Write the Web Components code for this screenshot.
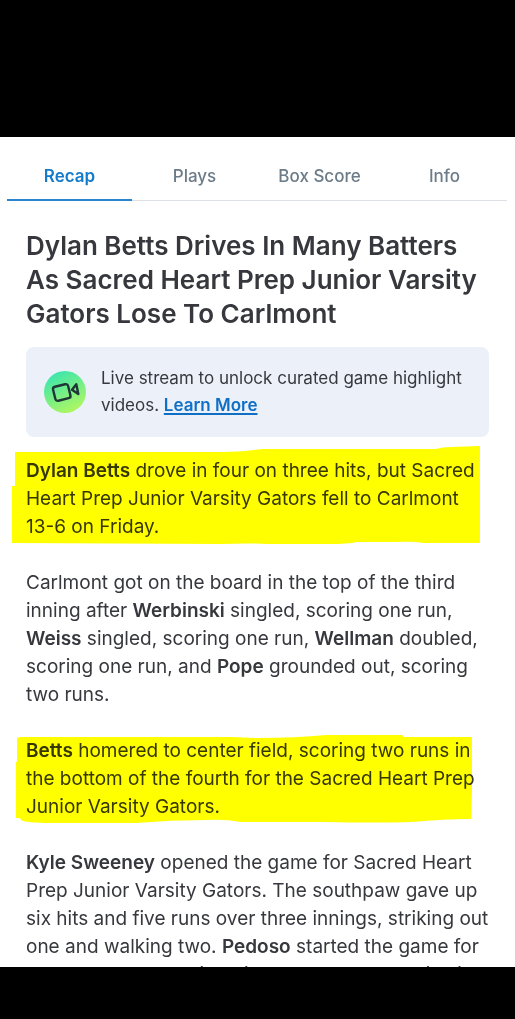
<!DOCTYPE html>
<html lang="en">
<head>
<meta charset="utf-8">
<meta name="viewport" content="width=device-width, initial-scale=1">
<title>Game Recap</title>
<style>
body { margin: 0; background: #000; color: #37383d; font-family: Inter, "Liberation Sans", sans-serif; }
</style>
</head>
<body>
<recap-screen>
  <game-tabs slot="tabs"></game-tabs>
  <recap-title>Dylan Betts Drives In Many Batters As Sacred Heart Prep Junior Varsity Gators Lose To Carlmont</recap-title>
  <stream-banner>Live stream to unlock curated game highlight videos.</stream-banner>
  <recap-text mark="lead"><b>Dylan Betts</b> drove in four on three hits, but Sacred Heart Prep Junior Varsity Gators fell to Carlmont 13-6 on Friday.</recap-text>
  <recap-text>Carlmont got on the board in the top of the third inning after <b>Werbinski</b> singled, scoring one run, <b>Weiss</b> singled, scoring one run, <b>Wellman</b> doubled, scoring one run, and <b>Pope</b> grounded out, scoring two runs.</recap-text>
  <recap-text mark="play"><b>Betts</b> homered to center field, scoring two runs in the bottom of the fourth for the Sacred Heart Prep Junior Varsity Gators.</recap-text>
  <recap-text><b>Kyle Sweeney</b> opened the game for Sacred Heart Prep Junior Varsity Gators. The southpaw gave up six hits and five runs over three innings, striking out one and walking two. <b>Pedoso</b> started the game for Carlmont. The starting pitcher surrendered six hits</recap-text>
</recap-screen>
<script>
class RecapElement extends HTMLElement {
  constructor() {
    super();
    this.attachShadow({ mode: "open" }).innerHTML = this.render();
  }
}

customElements.define("recap-screen", class extends RecapElement {
  render() {
    return `<style>
      :host { display: flex; flex-direction: column; box-sizing: border-box; height: 100vh; padding: 137px 0 52px; background: #000; }
      main { flex: 1; min-height: 0; overflow: hidden; background: #fff; }
      article { padding: 28px 26px 0; }
    </style>
    <main><slot name="tabs"></slot><article><slot></slot></article></main>`;
  }
});

customElements.define("game-tabs", class extends RecapElement {
  render() {
    return `<style>
      :host { display: block; padding: 0 8px 0 7px; }
      nav { display: grid; grid-template-columns: repeat(4, 1fr); height: 64px; box-shadow: inset 0 -1px #dcdfe3; }
      a { display: flex; align-items: center; justify-content: center; padding-top: 15px; border-bottom: 2px solid transparent; color: #6b7b88; font-size: 17px; font-weight: 500; line-height: 24px; text-decoration: none; }
      a[aria-current] { color: #147bcb; border-color: #2a84cf; font-weight: 600; }
    </style>
    <nav><a href="#recap" aria-current="page">Recap</a><a href="#plays">Plays</a><a href="#box">Box Score</a><a href="#info">Info</a></nav>`;
  }
});

customElements.define("recap-title", class extends RecapElement {
  render() {
    return `<style>
      :host { display: block; }
      h1 { margin: 0; font-size: 26px; font-weight: 600; line-height: 34px; }
    </style>
    <h1><slot></slot></h1>`;
  }
});

customElements.define("stream-banner", class extends RecapElement {
  render() {
    return `<style>
      :host { display: flex; align-items: center; gap: 15px; margin: 16px 0 20px; padding: 18px; border-radius: 8px; background: #ebf0f9; }
      svg { flex: none; width: 42px; height: 42px; }
      p { margin: 0; font-size: 17px; line-height: 27px; }
      a { color: #0f6fc5; font-weight: 600; text-underline-offset: 2px; text-decoration-thickness: 2px; }
    </style>
    <svg viewBox="0 0 42 42" aria-hidden="true">
      <defs><linearGradient id="g" x1=".25" y1="0" x2=".75" y2="1"><stop offset="0" stop-color="#38e5b0"/><stop offset="1" stop-color="#b4f85c"/></linearGradient></defs>
      <circle cx="21" cy="21" r="21" fill="url(#g)"/>
      <g fill="none" stroke="#203538" stroke-width="2.4" stroke-linejoin="round">
        <rect x="10" y="14.300" width="15.500" height="14.400" rx="2.500" transform="rotate(-14 17.700 21.500)"/>
        <path d="M28 18.800 32.300 13.200 34.300 23Z"/>
      </g>
    </svg>
    <p><slot></slot> <a href="#learn">Learn More</a></p>`;
  }
});

customElements.define("recap-text", class extends RecapElement {
  render() {
    return `<style>
      :host { display: block; position: relative; margin-bottom: 28px; font-size: 19px; line-height: 28px; }
      ::slotted(b) { font-weight: 600; }
      p { margin: 0; }
      svg { display: none; position: absolute; fill: #ffff00; mix-blend-mode: multiply; pointer-events: none; }
      :host([mark="lead"]) .lead { display: block; left: -14px; top: -11px; width: 468px; height: 98px; }
      :host([mark="play"]) .play { display: block; left: -10px; top: -3px; width: 456px; height: 90px; }
    </style>
    <p><slot></slot></p>
    <svg class="lead" viewBox="0 0 468 98" aria-hidden="true"><path d="M3 6H210Q228 6 250 3H424Q430 1 440 1L468 0V97H412Q400 95 384 96H345Q335 98 318 98H255Q235 97 210 98L0 97V40H3Z"/></svg>
    <svg class="play" viewBox="0 0 456 90" aria-hidden="true"><path d="M1 4 4 3H215L240 4Q280 4 310 1H386L388 3H456V58L455 85Q428 85 396 88Q360 89 310 88H224Q210 85 190 86Q155 86 120 89H35Q10 89 5 86L4 84H0V28H1Z"/></svg>`;
  }
});
</script>
</body>
</html>
